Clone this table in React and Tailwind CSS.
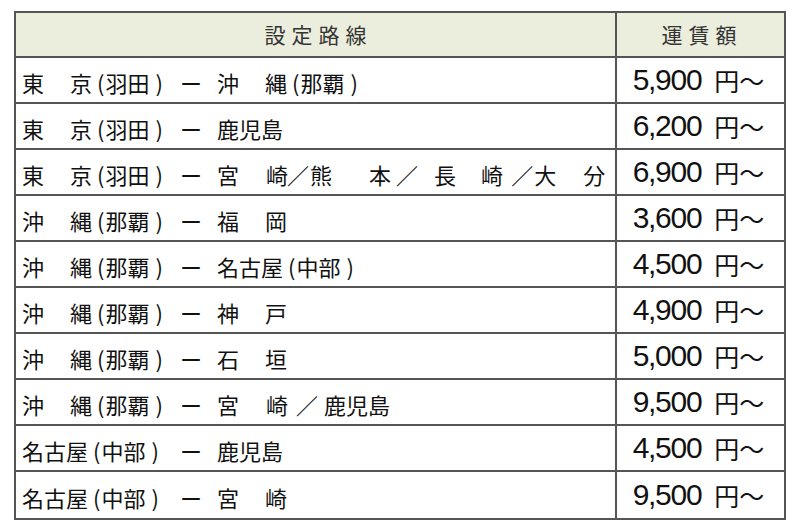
// destination given either as a plain label or as [glyph, left margin] pairs where spacing is uneven
const routes = [
  ["東　京(羽田)", "沖　縄(那覇)", "5,900"],
  ["東　京(羽田)", "鹿児島", "6,200"],
  [
    "東　京(羽田)",
    [["宮", 0], ["崎", 27], ["／", -1], ["熊", 1], ["本", 37], ["／", 5], ["長", 16], ["崎", 25], ["／", 8], ["大", 1], ["分", 27]],
    "6,900"
  ],
  ["沖　縄(那覇)", "福　岡", "3,600"],
  ["沖　縄(那覇)", "名古屋(中部)", "4,500"],
  ["沖　縄(那覇)", "神　戸", "4,900"],
  ["沖　縄(那覇)", "石　垣", "5,000"],
  ["沖　縄(那覇)", [["宮", 0], ["崎", 27], ["／", 8], ["鹿", 6], ["児", 0], ["島", 0]], "9,500"],
  ["名古屋(中部)", "鹿児島", "4,500"],
  ["名古屋(中部)", "宮　崎", "9,500"]
];

function Label({ text }) {
  if (Array.isArray(text)) {
    return (
      <span className="inline-flex items-baseline">
        {text.map(([ch, ml], i) => (
          <span key={i} style={{ marginLeft: ml }}>
            {ch}
          </span>
        ))}
      </span>
    );
  }
  const parts = [];
  text.split("").forEach((ch, i) => {
    if (ch === "　") {
      parts.push(<span key={i} className="inline-block w-[26px]" />);
    } else if (ch === "(") {
      parts.push(<span key={i} className="ml-[5px] mr-[1px]">(</span>);
    } else if (ch === ")") {
      parts.push(<span key={i} className="ml-[6px]">)</span>);
    } else {
      parts.push(<span key={i}>{ch}</span>);
    }
  });
  return <span className="inline-flex items-baseline whitespace-pre">{parts}</span>;
}

export default function App() {
  return (
    <div className="w-[800px] h-[529px] bg-white pt-[11px] pl-[14px] font-['Noto_Sans_CJK_JP',sans-serif] text-[#111]">
      <div className="w-[772px] border-2 border-[#555]">
        {/* header */}
        <div className="flex h-[45px] bg-[#ebeddd] border-b-2 border-[#555] text-[#333] text-[21px] tracking-[6px]">
          <div className="w-[601px] flex items-center justify-center pl-[6px] border-r-2 border-[#555]">
            設定路線
          </div>
          <div className="flex-1 flex items-center justify-center pl-[3px]">運賃額</div>
        </div>

        {routes.map(([from, to, price], i) => (
          <div
            key={i}
            className={
              "flex h-[46px] " + (i < routes.length - 1 ? "border-b-2 border-[#555]" : "")
            }
          >
            <div className="w-[601px] border-r-2 border-[#555] flex items-center pt-[3px] pl-[6px] text-[22px] leading-none">
              <div className="w-[158px]">
                <Label text={from} />
              </div>
              <div className="w-[37px]">ー</div>
              <Label text={to} />
            </div>
            <div className="flex-1 flex items-center justify-center pr-[4px]">
              <span className="font-['Liberation_Sans',sans-serif] text-[30px] tracking-[-1.3px] leading-none">
                {price}
              </span>
              <span className="ml-[13px] text-[25px] leading-none">円～</span>
            </div>
          </div>
        ))}
      </div>
    </div>
  );
}
